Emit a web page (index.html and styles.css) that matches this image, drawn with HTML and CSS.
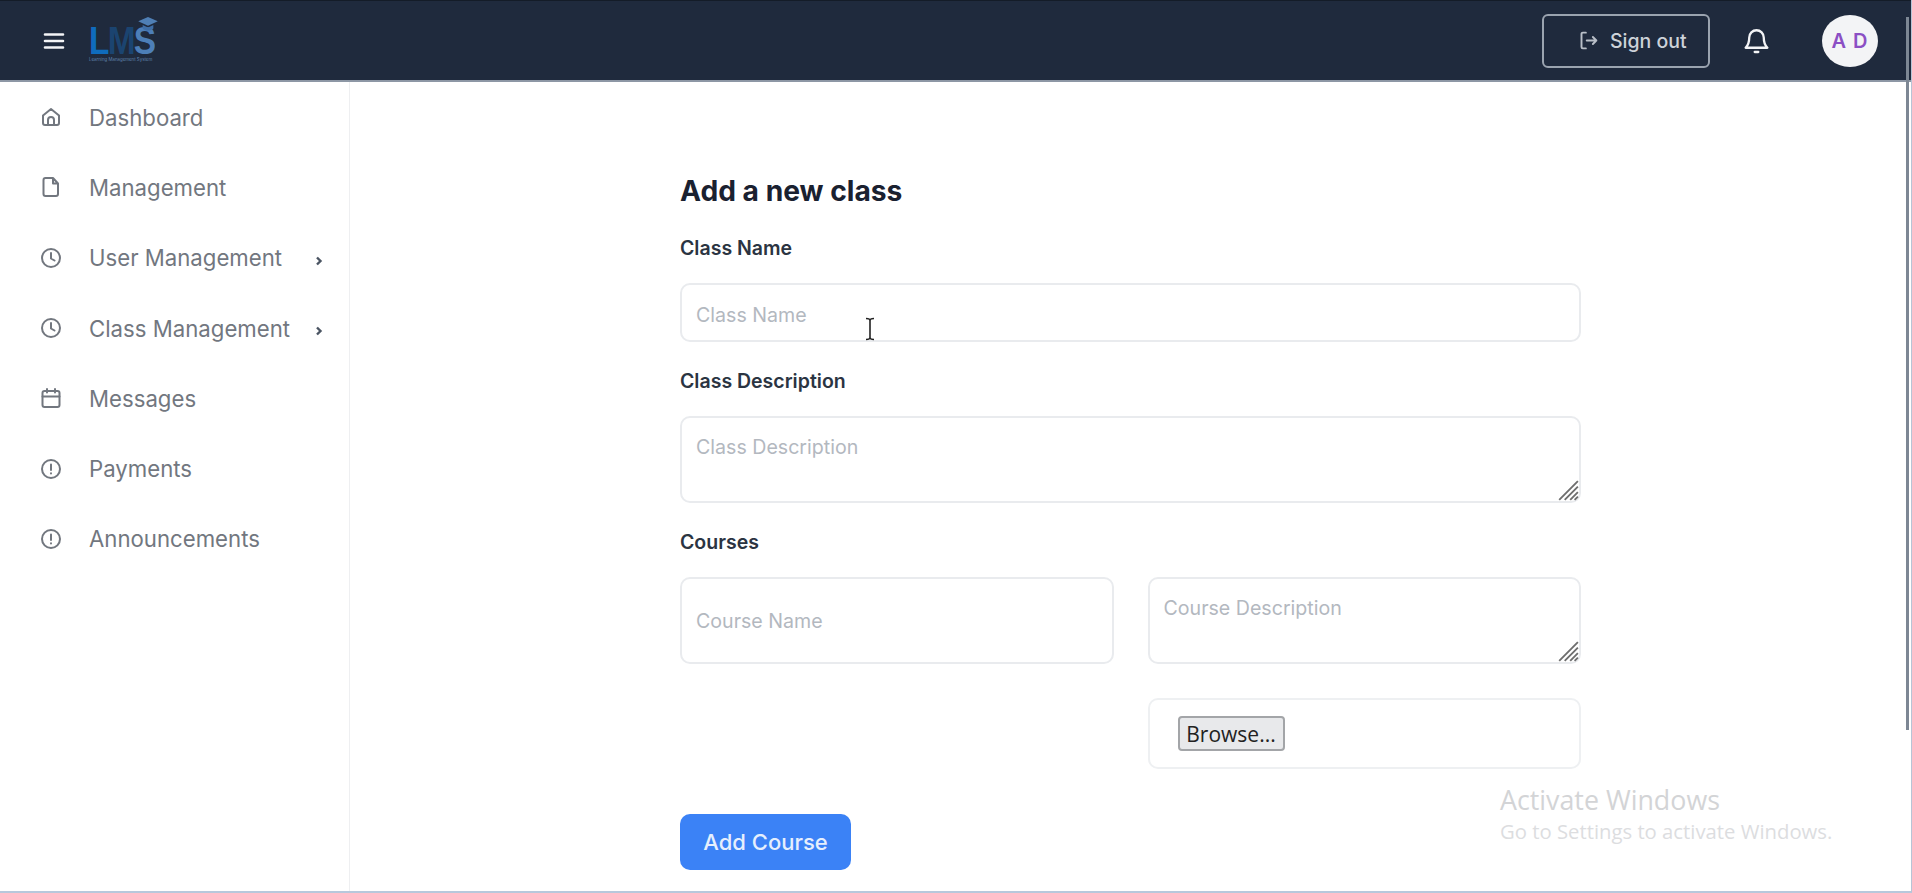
FILE: index.html
```html
<!DOCTYPE html>
<html lang="en">
<head>
    <meta charset="UTF-8">
    <meta name="viewport" content="width=device-width, initial-scale=1.0">
    <title>LMS - Add a new class</title>
    <link rel="stylesheet" href="styles.css">
</head>
<body>
    <header class="topbar">
        <div class="topbar-left">
            <svg class="menu-icon" viewBox="0 0 24 24" fill="none" stroke="currentColor" stroke-width="2.6" stroke-linecap="round">
                <path d="M3 5.500h18M3 12h18M3 18.500h18"/>
            </svg>
            <div class="logo">
                <div class="logo-letters"><span class="logo-l">L</span><span class="logo-m">M</span><span class="logo-s">S</span></div>
                <div class="logo-sub">Learning Management System</div>
                <svg class="logo-cap" viewBox="0 0 24 18"><path d="M12 1 23 6l-11 5L1 6z" fill="#4f7fb5"/><path d="M6 10v4c3 3 9 3 12 0v-4l-6 3z" fill="#3f6ea6"/></svg>
            </div>
        </div>
        <div class="topbar-right">
            <button class="signout">
                <svg class="signout-icon" viewBox="0 0 24 24" fill="none" stroke="currentColor" stroke-width="2.200" stroke-linecap="round" stroke-linejoin="round">
                    <path d="M9 3H5.500A1.500 1.500 0 0 0 4 4.500v15A1.500 1.500 0 0 0 5.500 21H9M10 12h11M17 8l4 4-4 4"/>
                </svg>
                Sign out
            </button>
            <svg class="bell" viewBox="0 0 24 24" fill="none" stroke="currentColor" stroke-width="1.900" stroke-linecap="round" stroke-linejoin="round">
                <path d="M18 9.500a6 6 0 0 0-12 0c0 5-1.500 7-3 8.500h18c-1.500-1.500-3-3.500-3-8.500zM10.500 21.500h3"/>
            </svg>
            <div class="avatar">A D</div>
        </div>
    </header>

    <div class="page">
        <aside class="sidebar">
            <a class="nav-item">
                <svg class="nav-icon" viewBox="0 0 24 24"><path d="M4 10.500 12 4l8 6.500V18a2 2 0 0 1-2 2H6a2 2 0 0 1-2-2zM9 20v-5a3 3 0 0 1 6 0v5"/></svg>
                <span>Dashboard</span>
            </a>
            <a class="nav-item">
                <svg class="nav-icon" viewBox="0 0 24 24"><path d="M6.500 3H14l5 5.500V19a2 2 0 0 1-2 2H6.500a2 2 0 0 1-2-2V5a2 2 0 0 1 2-2zM14 3v5.500h5"/></svg>
                <span>Management</span>
            </a>
            <a class="nav-item">
                <svg class="nav-icon" viewBox="0 0 24 24"><circle cx="12" cy="12" r="9"/><path d="M12 7v5.500l3.500 2"/></svg>
                <span>User Management</span>
                <svg class="caret" viewBox="0 0 8 10"><path d="M2 1.500 5.500 5 2 8.500"/></svg>
            </a>
            <a class="nav-item">
                <svg class="nav-icon" viewBox="0 0 24 24"><circle cx="12" cy="12" r="9"/><path d="M12 7v5.500l3.500 2"/></svg>
                <span>Class Management</span>
                <svg class="caret" viewBox="0 0 8 10"><path d="M2 1.500 5.500 5 2 8.500"/></svg>
            </a>
            <a class="nav-item">
                <svg class="nav-icon" viewBox="0 0 24 24"><rect x="3.500" y="5" width="17" height="16" rx="2"/><path d="M3.500 10.500h17M8 3v3.500M16 3v3.500"/></svg>
                <span>Messages</span>
            </a>
            <a class="nav-item">
                <svg class="nav-icon" viewBox="0 0 24 24"><circle cx="12" cy="12" r="9"/><path d="M12 7.500v5.500M12 16.200v.3"/></svg>
                <span>Payments</span>
            </a>
            <a class="nav-item">
                <svg class="nav-icon" viewBox="0 0 24 24"><circle cx="12" cy="12" r="9"/><path d="M12 7.500v5.500M12 16.200v.3"/></svg>
                <span>Announcements</span>
            </a>
        </aside>

        <main class="content">
            <form class="class-form">
                <h1>Add a new class</h1>
                <label class="field-label">Class Name</label>
                <input class="field field-name" type="text" placeholder="Class Name">
                <label class="field-label">Class Description</label>
                <div class="area-wrap class-area">
                    <textarea class="field field-area" placeholder="Class Description"></textarea>
                    <svg class="grip" viewBox="0 0 20 20"><path d="M2 19 19 2M7 19 19 7M12 19l7-7M16 19l3-3"/></svg>
                </div>
                <label class="field-label">Courses</label>
                <div class="course-row">
                    <input class="field field-course" type="text" placeholder="Course Name">
                    <div class="area-wrap">
                        <textarea class="field field-area" placeholder="Course Description"></textarea>
                        <svg class="grip" viewBox="0 0 20 20"><path d="M2 19 19 2M7 19 19 7M12 19l7-7M16 19l3-3"/></svg>
                    </div>
                    <div></div>
                    <div class="file-box"><button type="button" class="browse">Browse...</button></div>
                </div>
                <button type="button" class="add-course">Add Course</button>
            </form>
        </main>
    </div>

    <svg class="text-cursor" viewBox="0 0 12 24" fill="none" stroke="#222" stroke-width="1.600">
        <path d="M2 1.500c2 0 4 .5 4 2v17c0 1.500-2 2-4 2M10 1.500c-2 0-4 .5-4 2v17c0 1.500 2 2 4 2"/>
    </svg>
    <div class="scrollbar"></div>
    <div class="watermark">
        <div class="watermark-title">Activate Windows</div>
        <div class="watermark-sub">Go to Settings to activate Windows.</div>
    </div>
</body>
</html>
```

FILE: styles.css
```css
* {
    box-sizing: border-box;
}

html, body {
    height: 100%;
}

body {
    margin: 0;
    height: 893px;
    overflow: hidden;
    display: flex;
    flex-direction: column;
    background-color: #fff;
    font-family: Inter, "Liberation Sans", sans-serif;
    border-right: 1px solid #b7c4d6;
    border-bottom: 2px solid #b7c8dc;
}

.topbar {
    height: 82px;
    flex-shrink: 0;
    display: flex;
    justify-content: space-between;
    align-items: center;
    padding: 0 33px 0 42px;
    background-color: #1f2a3d;
    border-bottom: 2px solid #8d97a5;
    border-top: 1px solid #141c28;
}

.topbar-left {
    display: flex;
    align-items: center;
    gap: 23px;
}

.menu-icon {
    width: 24px;
    height: 24px;
    color: #f3f4f6;
}

.logo {
    position: relative;
    width: 66px;
    height: 36px;
    margin-top: 6px;
}

.logo-letters {
    height: 30px;
    font-family: "Liberation Sans", sans-serif;
    font-weight: 700;
    font-size: 38px;
    line-height: 30px;
    white-space: nowrap;
    transform: scaleX(.88);
    transform-origin: left center;
}

.logo-letters span {
    display: inline-block;
    height: 30px;
    line-height: 30px;
    letter-spacing: -2px;
}

.logo-l {
    color: #0f6cbd;
}

.logo-m {
    color: #1b4470;
}

.logo-s {
    color: #4d7fb8;
}

.logo-sub {
    margin-top: 1px;
    font-size: 4.400px;
    line-height: 6px;
    color: #5f84ad;
    white-space: nowrap;
}

.logo-cap {
    position: absolute;
    top: -10px;
    right: -4px;
    width: 22px;
    height: 16px;
}

.topbar-right {
    display: flex;
    align-items: center;
}

.signout {
    width: 168px;
    height: 54px;
    padding: 0 0 0 34px;
    display: flex;
    align-items: center;
    gap: 11px;
    font-family: inherit;
    font-size: 19.500px;
    font-weight: 500;
    color: #cdd2d9;
    background: none;
    border: 2px solid #9aa3af;
    border-radius: 6px;
}

.signout-icon {
    width: 21px;
    height: 21px;
    color: #b9bfc8;
}

.bell {
    width: 29px;
    height: 29px;
    margin-left: 32px;
    color: #f3f4f6;
}

.avatar {
    width: 56px;
    height: 52px;
    margin-left: 51px;
    border-radius: 50%;
    display: flex;
    justify-content: center;
    align-items: center;
    font-size: 20px;
    font-weight: 600;
    letter-spacing: 1px;
    color: #8b4fc4;
    background-color: #f3f4f6;
}

.page {
    flex: 1;
    display: flex;
    min-height: 0;
}

.sidebar {
    width: 350px;
    flex-shrink: 0;
    padding-right: 26px;
    border-right: 1px solid #eeeff1;
}

.nav-item {
    height: 70.300px;
    display: flex;
    align-items: center;
    padding-left: 39px;
    font-size: 22.200px;
    color: #72777f;
}

.nav-icon {
    width: 24px;
    height: 24px;
    margin-right: 26px;
    flex-shrink: 0;
    fill: none;
    stroke: #72777f;
    stroke-width: 2;
    stroke-linecap: round;
    stroke-linejoin: round;
}

.caret {
    width: 8px;
    height: 10px;
    margin: 6px 0 0 auto;
    fill: none;
    stroke: #4b5563;
    stroke-width: 2.400;
}

.content {
    flex: 1;
    min-width: 0;
}

.class-form {
    width: 901px;
    margin: 0 auto;
    padding-top: 92px;
}

h1 {
    margin: 0 0 28px;
    font-size: 28.200px;
    line-height: 34px;
    font-weight: 700;
    color: #1a2130;
}

.field-label {
    display: block;
    margin-bottom: 23px;
    font-size: 19.500px;
    line-height: 24px;
    font-weight: 600;
    color: #2b3442;
}

.field {
    display: block;
    width: 100%;
    padding: 17px 14px 13px;
    font-family: inherit;
    font-size: 19.600px;
    line-height: 24px;
    color: #111827;
    background-color: #fff;
    border: 2px solid #e9ebee;
    border-radius: 10px;
    outline: none;
}

.field::placeholder {
    color: #b3b8bf;
}

.field-name {
    height: 59px;
    margin-bottom: 27px;
}

.area-wrap {
    position: relative;
}

.class-area {
    margin-bottom: 27px;
}

.field-area {
    height: 87px;
    resize: none;
}

.grip {
    position: absolute;
    right: 2px;
    bottom: 2px;
    width: 22px;
    height: 22px;
    fill: none;
    stroke: #6e6e6e;
    stroke-width: 1.700;
}

.course-row {
    display: grid;
    grid-template-columns: 1fr 1fr;
    column-gap: 34px;
    row-gap: 34px;
}

.field-course {
    height: 87px;
    padding: 15px 14px;
}

.file-box {
    height: 71px;
    padding-left: 28px;
    display: flex;
    align-items: center;
    border: 2px solid #eef0f2;
    border-radius: 10px;
}

.browse {
    width: 107px;
    height: 35px;
    padding: 0;
    font-family: "Open Sans", "Liberation Sans", sans-serif;
    font-size: 21px;
    color: #222;
    background-color: #e8e9eb;
    border: 2px solid #a3a5a8;
    border-radius: 4px;
}

.add-course {
    display: block;
    width: 171px;
    height: 56px;
    margin-top: 45px;
    padding: 0;
    font-family: inherit;
    font-size: 22px;
    font-weight: 500;
    color: #e6effd;
    background-color: #3b82f6;
    border: none;
    border-radius: 10px;
}

.text-cursor {
    position: absolute;
    left: 864px;
    top: 317px;
    width: 12px;
    height: 24px;
}

.scrollbar {
    position: absolute;
    right: 3px;
    top: 17px;
    width: 3px;
    height: 713px;
    background-color: #7d8794;
}

.watermark {
    position: absolute;
    left: 1500px;
    top: 783px;
    font-family: "Open Sans", sans-serif;
    color: #d3d4d6;
}

.watermark-title {
    font-size: 26.800px;
    line-height: 34px;
}

.watermark-sub {
    font-size: 20.300px;
    line-height: 29px;
    color: #dcdddf;
}
```
